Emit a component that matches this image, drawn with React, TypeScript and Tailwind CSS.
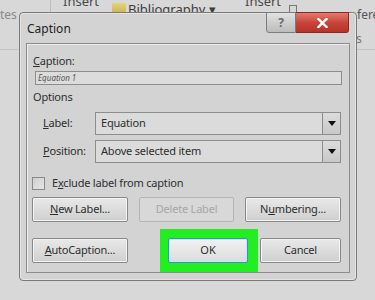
import React from "react";

const font = { fontFamily: '"Noto Sans", "Open Sans", sans-serif' };

function Btn({ children, disabled, className = "" }: { children: React.ReactNode; disabled?: boolean; className?: string }) {
  return (
    <div
      className={
        "flex h-[25px] items-center justify-center rounded-[2px] border text-[11px] tracking-[-0.2px] " +
        (disabled
          ? "border-[#b4b4b4] bg-[#d8d8d8] text-[#a6a6a6] "
          : "border-[#8a8a8a] bg-gradient-to-b from-[#e9e9e9] to-[#cfcfcf] text-[#2e2e2e] shadow-[inset_0_0_0_1px_#f2f2f2] ") +
        className
      }
    >
      {children}
    </div>
  );
}

function Select({ value }: { value: string }) {
  return (
    <div className="flex h-full w-[246px] items-stretch border border-[#8d8d8d] bg-[#dbdbdb]">
      <div className="flex flex-1 items-center pl-[5px] text-[11px] tracking-[-0.2px] text-[#2e2e2e]">{value}</div>
      <div className="flex w-[18px] items-center justify-center border-l border-[#8d8d8d] bg-gradient-to-b from-[#dcdcdc] to-[#c8c8c8]">
        <svg width="8" height="5" viewBox="0 0 8 5">
          <path d="M0 0H8L4 5Z" fill="#111" />
        </svg>
      </div>
    </div>
  );
}

export default function App() {
  return (
    <div className="relative h-[300px] w-[375px] overflow-hidden bg-[#d8d8d8]" style={font}>
      {/* background ribbon fragments */}
      <div className="absolute left-[50px] top-0 h-[12px] w-px bg-[#bdbdbd]" />
      <div className="absolute left-[63px] top-[-8px] text-[13px] text-[#4a4a4a]">Insert</div>
      <div className="absolute left-[112px] top-[3px] h-[10px] w-[14px] rounded-[1px] bg-gradient-to-b from-[#e8d27a] to-[#c9b55a]" />
      <div className="absolute left-[128px] top-[0px] text-[13px] text-[#3c3c3c]">Bibliography ▾</div>
      <div className="absolute left-[245px] top-[-8px] text-[13px] text-[#4a4a4a]">Insert</div>
      <div className="absolute left-[289px] top-[5px] h-[9px] w-[8px] border border-[#777]" />
      <div className="absolute left-[0px] top-[6px] text-[12px] text-[#8a8a8a]">tes</div>
      <div className="absolute left-[0px] top-[49px] h-px w-[18px] bg-[#c4c4c4]" />
      <div className="absolute left-[357px] top-[6px] text-[12px] text-[#555]">fere</div>
      <div className="absolute left-[356px] top-[30px] text-[12px] text-[#777]">s</div>
      <div className="absolute left-[357px] top-[49px] h-px w-[18px] bg-[#c4c4c4]" />

      {/* dialog */}
      <div className="relative ml-[19px] mt-[12px] flex h-[269px] w-[338px] flex-col rounded-[4px] border border-[#7a7a7a] bg-[#d3d3d3] shadow-[inset_0_0_0_1px_#e4e4e4]">
        {/* title bar */}
        <div className="flex h-[30px] items-start justify-between">
          <div className="pl-[7px] pt-[8px] text-[12px] leading-[16px] text-[#1e1e1e]">Caption</div>
          <div className="mr-[7px] mt-[-1px] flex">
            <div className="flex h-[21px] w-[30px] items-center justify-center rounded-bl-[3px] border border-[#7c7c7c] bg-gradient-to-b from-[#e2e2e2] to-[#bcbcbc] text-[12px] font-bold text-[#6a6a6a]">
              ?
            </div>
            <div className="flex h-[21px] w-[53px] items-center justify-center rounded-br-[3px] border border-l-0 border-[#8a2a22] bg-gradient-to-b from-[#e07a6e] via-[#c8453a] to-[#b83226]">
              <svg width="11" height="10" viewBox="0 0 11 10">
                <path d="M1.5 1L9.5 9M9.5 1L1.5 9" stroke="#fff" strokeWidth="2.4" strokeLinecap="square" />
              </svg>
            </div>
          </div>
        </div>

        {/* inner panel */}
        <div className="mx-[6px] flex h-[230px] flex-col border border-[#8c8c8c] text-[#2e2e2e] shadow-[inset_1px_1px_0_#ececec]">
          <div className="ml-[6px] mt-[9px] text-[11px] leading-[16px] tracking-[-0.2px]">
            <span className="underline">C</span>aption:
          </div>
          <div className="ml-[8px] mt-[2px] flex h-[14px] w-[307px] items-center border border-[#8d8d8d] bg-[#dcdcdc] pl-[2px] text-[8px] italic text-[#555]">
            Equation 1
          </div>
          <div className="ml-[6px] mt-[4px] text-[11px] leading-[16px] tracking-[-0.2px]">Options</div>

          <div className="mt-[7px] flex h-[24px] items-center">
            <div className="w-[68px] pl-[16px] text-[11px] tracking-[-0.2px]">
              <span className="underline">L</span>abel:
            </div>
            <Select value="Equation" />
          </div>
          <div className="mt-[5px] flex h-[23px] items-center">
            <div className="w-[68px] pl-[16px] text-[11px] tracking-[-0.2px]">
              <span className="underline">P</span>osition:
            </div>
            <Select value="Above selected item" />
          </div>

          <div className="mt-[13px] flex items-center">
            <div className="ml-[5px] h-[13px] w-[13px] border border-[#8a8a8a] bg-gradient-to-br from-[#cfcfcf] to-[#e6e6e6]" />
            <div className="ml-[7px] text-[11px] leading-[14px] tracking-[-0.2px]">
              E<span className="underline">x</span>clude label from caption
            </div>
          </div>

          <div className="ml-[5px] mt-[7px] flex">
            <Btn className="w-[96px]">
              <span>
                <span className="underline">N</span>ew Label...
              </span>
            </Btn>
            <Btn disabled className="ml-[11px] w-[95px]">
              Delete Label
            </Btn>
            <Btn className="ml-[11px] w-[96px]">
              <span>
                N<span className="underline">u</span>mbering...
              </span>
            </Btn>
          </div>

          <div className="ml-[5px] mt-[7px] flex items-start">
            <Btn className="mt-[9px] w-[96px]">
              <span>
                <span className="underline">A</span>utoCaption...
              </span>
            </Btn>
            <div className="ml-[32px] h-[43px] w-[98px] bg-[#22ee22] pl-[8px] pt-[9px]">
              <div className="flex h-[25px] w-[80px] items-center justify-center rounded-[2px] border border-[#3a8fd0] bg-gradient-to-b from-[#f2f2f2] to-[#dcdcdc] text-[11px] text-[#2e2e2e] shadow-[inset_0_0_0_1px_#bfe6fb]">
                OK
              </div>
            </div>
            <Btn className="ml-[2px] mt-[9px] w-[81px]">Cancel</Btn>
          </div>
        </div>
      </div>
    </div>
  );
}
